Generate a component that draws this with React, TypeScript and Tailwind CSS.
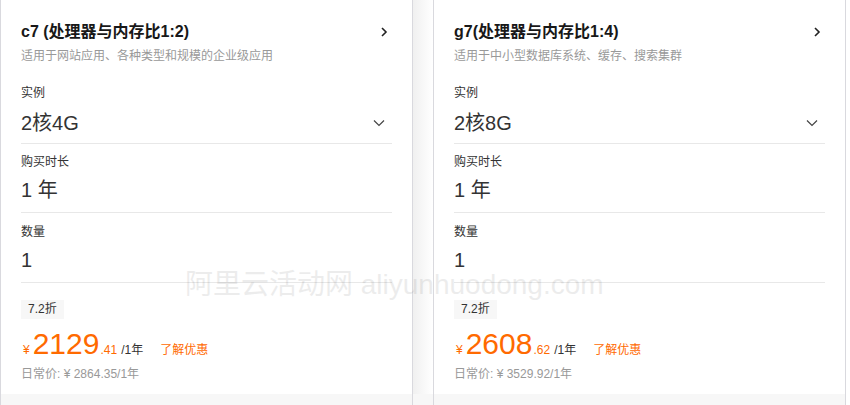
import React from 'react'

type Plan = {
  title: string
  desc: string
  spec: string
  price: string
  cents: string
  daily: string
}

const plans: Plan[] = [
  { title: 'c7 (处理器与内存比1:2)', desc: '适用于网站应用、各种类型和规模的企业级应用', spec: '2核4G', price: '2129', cents: '.41', daily: '¥ 2864.35/1年' },
  { title: 'g7(处理器与内存比1:4)', desc: '适用于中小型数据库系统、缓存、搜索集群', spec: '2核8G', price: '2608', cents: '.62', daily: '¥ 3529.92/1年' },
]

const ChevronRight = () => (
  <svg width="12" height="12" viewBox="0 0 12 12" fill="none">
    <path d="M4 2l4 4-4 4" stroke="#222" strokeWidth="1.6" />
  </svg>
)

const ChevronDown = () => (
  <svg width="14" height="14" viewBox="0 0 14 14" fill="none">
    <path d="M2 4.5l5 5 5-5" stroke="#444" strokeWidth="1.2" />
  </svg>
)

const Card = ({ p }: { p: Plan }) => (
  <div className="w-[413px] shrink-0 border-x border-[#d9d9de] flex flex-col">
    <div className="h-[394px] bg-white px-[20px] pt-[20px]">
      <div className="flex items-center justify-between h-[24px]">
        <span className="text-[16px] font-bold text-[#181818]">{p.title}</span>
        <span className="mr-[2px]"><ChevronRight /></span>
      </div>
      <div className="mt-[3px] text-[12px] leading-[18px] text-[#999]">{p.desc}</div>

      <div className="mt-[19px] text-[12px] leading-[18px] text-[#333]">实例</div>
      <div className="mt-[7px] flex items-center justify-between h-[28px] border-b border-[#e8e8e8] box-content pb-[6px]">
        <span className="text-[20px] text-[#333]">{p.spec}</span>
        <span className="mr-[6px]"><ChevronDown /></span>
      </div>

      <div className="mt-[9px] text-[12px] leading-[18px] text-[#333]">购买时长</div>
      <div className="mt-[5px] h-[28px] leading-[28px] text-[20px] text-[#333] border-b border-[#e8e8e8] box-content pb-[8px]">1 年</div>

      <div className="mt-[10px] text-[12px] leading-[18px] text-[#333]">数量</div>
      <div className="mt-[5px] h-[28px] leading-[28px] text-[20px] text-[#333] border-b border-[#e8e8e8] box-content pb-[8px]">1</div>

      <div className="mt-[17px] inline-block bg-[#f7f7f7] px-[7px] text-[12px] leading-[19px] text-[#333]">7.2折</div>
      <div className="mt-[6px] flex items-baseline h-[36px] text-[#ff6a00]">
        <span className="text-[12px] ml-[2px] mr-[3px]">¥</span>
        <span className="text-[30px] leading-[36px]">{p.price}</span>
        <span className="text-[12px] ml-[1px]">{p.cents}</span>
        <span className="text-[12px] text-[#333] ml-[4px]">/1年</span>
        <span className="text-[12px] ml-[17px]">了解优惠</span>
      </div>
      <div className="mt-[3px] text-[12px] leading-[18px] text-[#999]">日常价: {p.daily}</div>
    </div>
    <div className="flex-1 bg-[#f7f7f7]" />
  </div>
)

export default function App() {
  return (
    <div className="relative w-[850px] h-[405px] overflow-hidden bg-white flex" style={{ fontFamily: '"Liberation Sans", Arial, "Noto Sans CJK SC", sans-serif' }}>
      <Card p={plans[0]} />
      <div className="w-[20px] shrink-0 flex flex-col">
        <div className="h-[394px] bg-gradient-to-r from-[#f0f0f0] to-white" />
        <div className="flex-1 bg-[#f7f7f7]" />
      </div>
      <Card p={plans[1]} />
      <div className="pointer-events-none absolute left-[185px] top-[268px] text-[28px] leading-[34px] text-[#000] opacity-[0.07] whitespace-nowrap">
        阿里云活动网 aliyunhuodong.com
      </div>
    </div>
  )
}
